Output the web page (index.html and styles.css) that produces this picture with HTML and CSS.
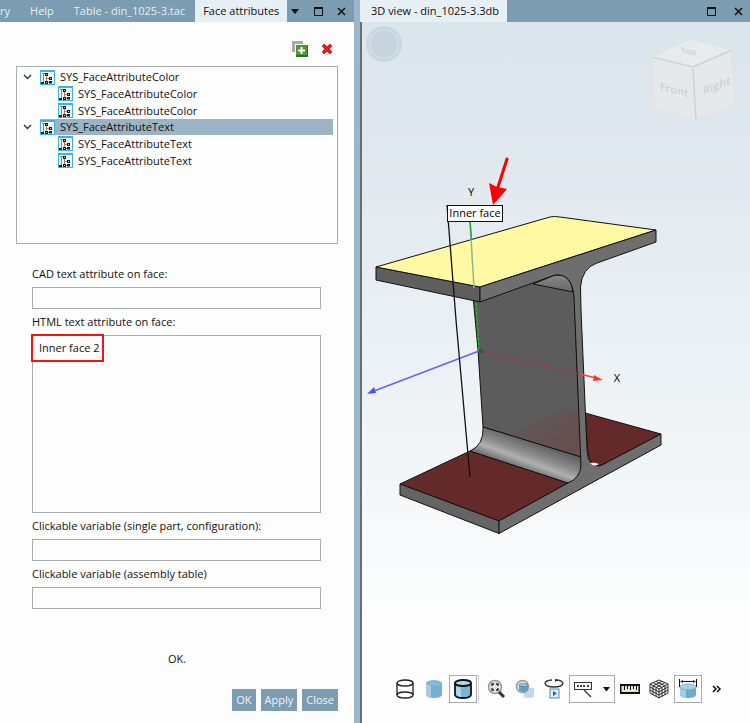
FILE: index.html
```html
<!DOCTYPE html>
<html lang="en">
<head>
<meta charset="utf-8">
<title>Face attributes</title>
<link rel="stylesheet" href="styles.css">
</head>
<body>
<svg class="defs" aria-hidden="true">
  <symbol id="i-max" viewBox="0 0 9 9"><path d="M.5 0V8.5H8.5V1H0" fill="none" stroke="#111"/><path d="M0 1H9" stroke="#111" stroke-width="2"/></symbol>
  <symbol id="i-x" viewBox="0 0 9 9"><path d="M1 1L8 8M8 1L1 8" stroke="#111" stroke-width="1.5" fill="none"/></symbol>
  <symbol id="i-chev" viewBox="0 0 9 6"><path d="M1 1L4.500 4.500L8 1" stroke="#333" stroke-width="1.400" fill="none"/></symbol>
  <symbol id="i-attr" viewBox="0 0 15 15">
    <rect x=".5" y=".5" width="14" height="14" fill="#f6fafc" stroke="#35b4e6"/>
    <path d="M0 1H15" stroke="#35b4e6" stroke-width="2"/>
    <path d="M3.500 3V12M2 3.500H5M6.500 5V12M6.500 8.500H9M6.500 12.500H9" stroke="#888" fill="none"/>
    <path d="M5 3h3v3h-3zM9 7h3v3h-3zM9 11h3v2.500h-3zM5 11h3v3h-3zM1 12h3v2h-3z" fill="#1c1c1c"/>
    <path d="M6 4h1v1h-1zM10 8h1v1h-1zM6 12h1v1h-1z" fill="#e8c477"/>
  </symbol>
</svg>
<main class="app">
  <section class="pane">
    <header class="bar">
      <nav class="tabs">
        <button class="tab cut">ry</button>
        <button class="tab">Help</button>
        <button class="tab">Table - din_1025-3.tac</button>
        <button class="tab active">Face attributes</button>
      </nav>
      <div class="controls">
        <button class="ctl" aria-label="Tab list"><svg width="9" height="5"><path d="M0 0H8L4 5Z" fill="#111"/></svg></button>
        <button class="ctl" aria-label="Maximize"><svg width="9" height="9"><use href="#i-max"/></svg></button>
        <button class="ctl" aria-label="Close pane"><svg width="9" height="9"><use href="#i-x"/></svg></button>
      </div>
    </header>
    <div class="content">
      <div class="actions">
        <button class="act" aria-label="Add"><svg width="16" height="16" viewBox="0 0 16 16"><path d="M0 0H11V3H3V11H0Z" fill="#aaa"/><rect x="4" y="4" width="12" height="12" fill="#2f6f1c"/><rect x="4" y="4" width="11" height="10" fill="#4a9a2c"/><path d="M9.500 6V13M6 9.500H13" stroke="#fff" stroke-width="2"/></svg></button>
        <button class="act" aria-label="Delete"><svg width="12" height="12" viewBox="0 0 12 12"><path d="M2 2L10 10M10 2L2 10" stroke="#a81212" stroke-width="3.500"/><path d="M2 2L10 10M10 2L2 10" stroke="#e32020" stroke-width="2.500"/></svg></button>
      </div>
      <div class="tree" role="tree">
        <div class="rows">
          <div class="row" role="treeitem"><svg class="chev" width="9" height="6"><use href="#i-chev"/></svg><span class="item"><svg width="15" height="15"><use href="#i-attr"/></svg>SYS_FaceAttributeColor</span></div>
          <div class="row child" role="treeitem"><span class="item"><svg width="15" height="15"><use href="#i-attr"/></svg>SYS_FaceAttributeColor</span></div>
          <div class="row child" role="treeitem"><span class="item"><svg width="15" height="15"><use href="#i-attr"/></svg>SYS_FaceAttributeColor</span></div>
          <div class="row selected" role="treeitem"><svg class="chev" width="9" height="6"><use href="#i-chev"/></svg><span class="item"><svg width="15" height="15"><use href="#i-attr"/></svg>SYS_FaceAttributeText</span></div>
          <div class="row child" role="treeitem"><span class="item"><svg width="15" height="15"><use href="#i-attr"/></svg>SYS_FaceAttributeText</span></div>
          <div class="row child" role="treeitem"><span class="item"><svg width="15" height="15"><use href="#i-attr"/></svg>SYS_FaceAttributeText</span></div>
        </div>
      </div>
      <form class="form">
        <label for="cad">CAD text attribute on face:</label>
        <input id="cad" type="text">
        <label for="html">HTML text attribute on face:</label>
        <div class="area"><textarea id="html" spellcheck="false">Inner face 2</textarea><div class="mark"></div></div>
        <label for="part">Clickable variable (single part, configuration):</label>
        <input id="part" type="text">
        <label for="asm">Clickable variable (assembly table)</label>
        <input id="asm" type="text">
      </form>
      <p class="status">OK.</p>
      <div class="buttons"><button>OK</button><button>Apply</button><button>Close</button></div>
    </div>
  </section>
  <div class="splitter"></div>
  <section class="pane">
    <header class="bar">
      <nav class="tabs"><button class="tab active wide">3D view - din_1025-3.3db</button></nav>
      <div class="controls right">
        <button class="ctl" aria-label="Maximize"><svg width="9" height="9"><use href="#i-max"/></svg></button>
        <button class="ctl" aria-label="Close pane"><svg width="9" height="9"><use href="#i-x"/></svg></button>
      </div>
    </header>
    <div class="view">
      <svg class="scene" viewBox="362 22 388 653" role="img" aria-label="I-beam model">
        <defs>
          <linearGradient id="fil" gradientUnits="userSpaceOnUse" x1="532" y1="441" x2="522" y2="468"><stop offset="0" stop-color="#606060"/><stop offset=".45" stop-color="#8c8c8c"/><stop offset=".72" stop-color="#b0b0b0"/><stop offset="1" stop-color="#777"/></linearGradient>
          <linearGradient id="fil2" x1="0" y1="0" x2="0" y2="1"><stop offset="0" stop-color="#888"/><stop offset="1" stop-color="#666"/></linearGradient>
          <linearGradient id="ghost" gradientUnits="userSpaceOnUse" x1="525" y1="416" x2="545" y2="446"><stop offset="0" stop-color="#5f5858"/><stop offset="1" stop-color="#655050"/></linearGradient>
        </defs>
        <circle cx="384" cy="44" r="18" fill="#cbd7e0"/>
        <circle cx="384" cy="44" r="14" fill="#c8d4dd" stroke="#d7e1e7"/>
        <g class="cube">
          <path d="M652 57L690 39L732 50L735 105L696 121L654 109Z" fill="#e6e9ea"/>
          <path d="M652 57L690 39L732 50L693 67Z" fill="#e7ebed"/>
          <path d="M652 57L693 67L732 50M693 67L696 121" fill="none" stroke="#cfd3d6" stroke-width="1.500"/>
          <path d="M652 57L690 39L732 50L735 105L696 121L654 109Z" fill="none" stroke="#dde2e5" stroke-width=".8"/>
          <text class="face" transform="translate(660 90) skewY(14)">Front</text>
          <text class="face" transform="translate(703 95) skewY(-22)">Right</text>
          <text class="face small" transform="translate(682 53) skewX(20) skewY(8)">Top</text>
        </g>
        <g stroke="#111" stroke-linejoin="round">
          <path d="M585 413L661 434L602 465Q590 469 588 453Z" fill="#642a2a"/>
          <path d="M400 484L470 451L568 483L499 521Z" fill="#642a2a"/>
          <path d="M400 484L499 521V533.500L400 495Z" fill="#646464"/>
          <path d="M473 296L478 350L483 427L581 457L574 290Q572 276 557 275Z" fill="#5c5c5c"/>
          <path d="M510 435L563 408L579 412L581 456Z" fill="url(#ghost)" stroke="none"/>
          <path d="M533 284L555 275Q571 273 573 292Z" fill="url(#fil2)"/>
          <path d="M483 427L581 457V470Q578 480 568 483L470 451Q484 445 483 427Z" fill="url(#fil)"/>
          <path d="M376 267L480 287V302L376 280Z" fill="#5e5e5e"/>
          <path d="M376 267L550 217Q554 216 560 217L656 230L480 287Z" fill="#fff9a4"/>
          <path d="M480 287L656 230V242L597 263Q582 268 580.500 287L581 310L587 450Q588 468 599 466L602 465L661 434V445L499 533.500V521L568 483Q580 478 581 466L574 297Q572 273 555 275L480 302Z" fill="#6e6e6e"/>
        </g>
        <path d="M590 463Q594 468 599 464Q594 462 590 463Z" fill="#eef2f5"/>
        <path d="M470 221L474 288" stroke="#8fb88a" stroke-width="1.500"/><path d="M470 221L471.500 240" stroke="#25a83c" stroke-width="1.500"/>
        <path d="M476 302L479 350" stroke="#27b11f" stroke-width="1.500" stroke-dasharray="4 1"/>
        <path d="M479 351L582 375" stroke="#9b3c3c"/><path d="M580 374L596 378" stroke="#f04848" stroke-width="1.500"/><path d="M594 375L603 380L593 381Z" fill="#ff3434"/>
        <path d="M479 351L374 391" stroke="#6464fa" stroke-width="1.500"/><path d="M367 394L374 387L376 393Z" fill="#5252f0"/>
        <circle cx="481" cy="351" r="2.500" fill="#3d5058"/>
        <path d="M447 205L456 320L470 477" fill="none" stroke="#111" stroke-width="1.300"/>
        <rect x="447.500" y="205.500" width="55" height="16" fill="#fff" stroke="#111"/>
        <text class="tag" x="475" y="217">Inner face</text>
        <text class="axis" x="471" y="196">Y</text>
        <text class="axis" x="617" y="382">X</text>
        <path d="M507 159L498 187" stroke="red" stroke-width="3" stroke-linecap="round"/><path d="M489 183L497 187L507 189L493 205Z" fill="red"/>
      </svg>
      <div class="tools" role="toolbar">
        <button class="tool" aria-label="Wireframe"><svg width="20" height="20" fill="none" stroke="#222" stroke-width="1.300"><ellipse cx="10" cy="4" rx="8" ry="3"/><path d="M2 4V16M18 4V16"/><ellipse cx="10" cy="16" rx="8" ry="3"/></svg></button>
        <button class="tool" aria-label="Shaded"><svg width="20" height="20"><path d="M2 4V16Q3 19 10 19T18 16V4Z" fill="#74aed0"/><path d="M2 4V16Q3 18 7 19V4Z" fill="#a5cee4"/><ellipse cx="10" cy="4" rx="8" ry="3" fill="#86b8d4"/></svg></button>
        <button class="tool on" aria-label="Shaded with edges"><svg width="20" height="20"><path d="M2 4V16Q3 19 10 19T18 16V4Z" fill="#78b4d8"/><path d="M2 4V16Q3 18 8 19V4Z" fill="#acd4ea"/><g fill="none" stroke="#111" stroke-width="1.800"><ellipse cx="10" cy="4" rx="8" ry="3" fill="#b9d4e2"/><path d="M2 4V16Q3 19 10 19T18 16V4"/></g></svg></button>
        <span class="sep"></span>
        <button class="tool" aria-label="Zoom to fit"><svg width="20" height="20" fill="none"><circle cx="9" cy="8" r="6.500" fill="#e2e2e2" stroke="#999" stroke-width="1.500"/><path d="M6 7V5H8M10 5H12V7M12 9V11H10M8 11H6V9" stroke="#222" stroke-width="1.300"/><path d="M13 13L18 18" stroke="#333" stroke-width="3"/></svg></button>
        <button class="tool" aria-label="Zoom selection"><svg width="20" height="20"><path d="M9 9H19V18Q14 20 9 18Z" fill="#bcd9eb"/><circle cx="7.500" cy="7.500" r="6" fill="#d9e5ec" stroke="#999" stroke-width="1.500"/><path d="M4 6H13V11Q8 15 4 11Z" fill="#5f9fc4"/><ellipse cx="8.500" cy="6" rx="4.500" ry="1.500" fill="#98c4dc" stroke="#467c99" stroke-width=".6"/></svg></button>
        <button class="tool" aria-label="Rotate"><svg width="20" height="20" fill="none"><path d="M8 1Q1 1.500 1 4.500Q2 8 10 8T19 4.500Q18 1 12 1" stroke="#333" stroke-width="1.300"/><path d="M11 0V3L14 1Z" fill="#222"/><rect x="6" y="10" width="9" height="9" fill="#e3f0f6" stroke="#4b8eae"/><path d="M9 12V17L13 14.500Z" fill="#126b9b"/></svg></button>
        <button class="tool combo" aria-label="Labels" aria-haspopup="menu"><svg width="20" height="20" fill="none"><rect x="1.500" y="3.500" width="17" height="7" fill="#f5f5f5" stroke="#333"/><path d="M4 7H6M7 7H9M10 7H12M14 7H16" stroke="#444" stroke-width="2"/><path d="M11 11L18 18" stroke="#333" stroke-width="1.300"/></svg><svg width="8" height="5"><path d="M0 0H7L3.500 4.500Z" fill="#111"/></svg></button>
        <button class="tool" aria-label="Measure"><svg width="22" height="20"><rect x="1" y="5" width="20" height="10" fill="#111"/><path d="M2.500 7H19.500V13H2.500Z" fill="#e7e2d3"/><path d="M5.500 7V11M8.500 7V10M11.500 7V11M14.500 7V10M17.500 7V11" stroke="#111"/></svg></button>
        <button class="tool" aria-label="Mesh"><svg width="20" height="20" fill="#eee" stroke="#222" stroke-width=".9"><path d="M10 1L19 5V14L10 19L1 14V5Z"/><path d="M1 5L10 10L19 5M10 10V19M4 3.500L13 8.500V17.500M7 2.300L16 7V16M16 3.500L7 8.500V17.500M13 2.300L4 7V16M1 8L10 13L19 8M1 11L10 16L19 11" fill="none"/></svg></button>
        <button class="tool on" aria-label="Dimensions"><svg width="20" height="20"><path d="M2 8V16Q3 19 10 19T18 16V8Z" fill="#6faace"/><path d="M2 8V16Q3 18 8 19V8Z" fill="#a3cee5"/><ellipse cx="10" cy="8" rx="8" ry="3" fill="#acd0e3" stroke="#6a9dbb" stroke-width=".7"/><path d="M1.500 0V8M18.500 0V8M3 2.500H17" stroke="#111"/><path d="M2 2.500L5 1V4ZM18 2.500L15 1V4Z" fill="#111"/></svg></button>
        <button class="tool" aria-label="More"><svg width="10" height="8" fill="none" stroke="#111" stroke-width="1.500"><path d="M1 1L4 4L1 7M5 1L8 4L5 7"/></svg></button>
      </div>
    </div>
  </section>
</main>
</body>
</html>
```
FILE: styles.css
```css
* { box-sizing: border-box; }
body { margin: 0; font: 11px/16px "Open Sans", "Noto Sans", sans-serif; color: #111; background: #fdfdfd; }
button, input, textarea { font: inherit; color: inherit; border: 0; padding: 0; margin: 0; background: none; border-radius: 0; }
svg { display: block; flex: none; }
.defs { position: absolute; width: 0; height: 0; }
.app { display: grid; grid-template-columns: 354fr 6px 390fr; min-height: 100vh; }
.pane { display: flex; flex-direction: column; min-width: 0; }
.splitter { background: #9ab6c9; }

.bar { display: flex; height: 22px; background: #7b9cb1; }
.tabs { display: flex; min-width: 0; }
.tab { padding: 0 10px; color: #e4eef4; white-space: nowrap; }
.tab.cut { padding-left: 0; }
.tab.active { padding: 0 8px; background: #e6eff4; color: #111; }
.tab.wide { padding: 0 8px 0 11px; }
.controls { display: flex; flex: 1; align-items: center; justify-content: flex-end; gap: 14px; padding-right: 8px; }
.controls.right { gap: 18px; padding-right: 7px; }

.content { display: flex; flex: 1; flex-direction: column; padding: 0 16px 12px 16px; }
.actions { display: flex; justify-content: flex-end; align-items: center; gap: 13px; height: 44px; padding: 10px 5px 0 0; }
.tree { min-height: 178px; border: 1px solid #a9adae; padding: 2px 4px 0 6px; }
.rows { display: grid; grid-auto-rows: 1fr; height: 100px; }
.row { display: flex; align-items: center; }
.chev { margin-right: 8px; }
.item { display: flex; flex: 1; align-items: center; gap: 5px; }
.row.child .item { margin-left: 35px; }
.row.selected .item { background: #9ab4c5; }

.form { display: flex; flex: 1; flex-direction: column; margin-top: 17px; padding: 0 17px 0 16px; }
.form label { line-height: 26px; }
.form input { width: 100%; height: 22px; border: 1px solid #a9adae; padding: 0 5px; }
.area { position: relative; display: flex; flex: 1; }
.area textarea { width: 100%; min-height: 178px; border: 1px solid #a9adae; padding: 4px 6px; resize: none; }
.mark { position: absolute; left: -1px; top: -1px; width: 73px; height: 28px; border: 2px solid #f01414; }
.status { margin: 0; padding: 40px 0 20px; line-height: 20px; text-align: center; }
.buttons { display: flex; justify-content: flex-end; gap: 5px; }
.buttons button { height: 22px; padding: 0 4px; background: #7b9cb1; color: #f0f6f9; }

.view { display: flex; flex: 1; flex-direction: column; border-left: 2px solid #6a6e71; background: linear-gradient(#dbe5ec, #e4ebf1 30%, #f0f4f7 58%, #fdfdfd 85%); }
.scene { flex: 1; width: 100%; }
.face { font-size: 11px; fill: #cdd1d4; font-weight: 600; }
.face.small { font-size: 8px; }
.tag { font-size: 11px; text-anchor: middle; }
.axis { font-size: 11px; text-anchor: middle; }
.tools { display: flex; gap: 1px; padding: 0 0 20px 29px; }
.tool { display: flex; align-items: center; justify-content: center; width: 28px; height: 28px; }
.tool.on, .tool.combo { border: 1px solid #aaa; }
.tool.combo { width: 46px; justify-content: space-between; padding: 0 3px; }
.sep { width: 3px; border-left: 1px dotted #bbb; }
```
